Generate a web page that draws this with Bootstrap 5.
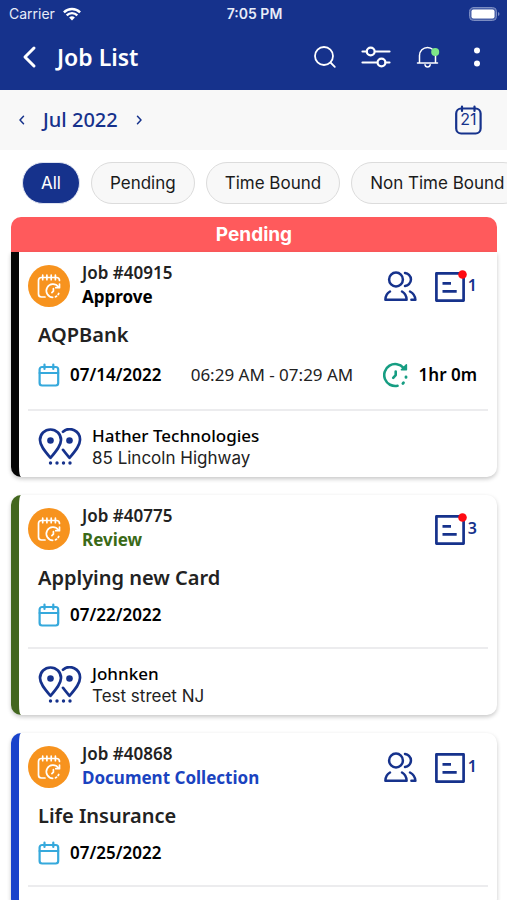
<!DOCTYPE html>
<html lang="en">
<head>
<meta charset="utf-8">
<meta name="viewport" content="width=device-width, initial-scale=1">
<title>Job List</title>
<link href="https://cdn.jsdelivr.net/npm/bootstrap@5.3.0/dist/css/bootstrap.min.css" rel="stylesheet">
<style>
  :root { --navy: #16328c; --noto: "Noto Sans", "Open Sans", sans-serif; --ui: Inter, "Liberation Sans", sans-serif; }
  body { font-family: var(--noto); font-size: 17px; color: #000; background: #fff; overflow-x: hidden; }
  svg { display: block; flex: none; fill: none; stroke: currentColor; stroke-linecap: round; stroke-linejoin: round; }
  .app-top { background: var(--navy); }
  .status-bar { height: 28px; font: 14px/28px var(--ui); padding: 0 7px 0 9px; color: #e8ecf8; }
  .status-bar > * { flex: 1 1 0; }
  .status-time { font-weight: 600; }
  .title-bar { height: 62px; padding: 0 18px 4px 19px; }
  .title-bar h1 { font-size: 23px; line-height: 30px; font-weight: 600; margin-left: 17px; }
  .icon-btn { background: none; border: 0; padding: 0; color: inherit; display: block; }
  .month-bar { height: 60px; background: #f8f8f8; color: var(--navy); padding: 0 24px 0 16px; }
  .month-bar h2 { font-size: 20px; line-height: 28px; font-weight: 500; margin: 0 15px; }
  .day-text { font: 16px var(--ui); fill: currentColor; stroke: none; }
  .chips { padding: 12px 0 13px 22px; gap: 11px; overflow: hidden; }
  .chip { font: 17px/24px var(--ui); color: #1b1b1b; background: #f8f8f8; border: 1px solid #dcdcdc; border-radius: 21px; padding: 8px 18px; white-space: nowrap; }
  .chip.active { background: var(--navy); color: #fff; border-color: #dfe3f0; }
  .jobs { padding: 0 10px 0 11px; gap: 18px; }
  .group-title { font: 700 19px/35px var(--ui); color: #fff; background: #ff5a5c; border-radius: 10px 10px 0 0; text-align: center; margin: 0; }
  .job { background: #fff; border-left: 8px solid var(--edge); border-radius: 10px; box-shadow: 0 2px 4px rgba(0,0,0,.22); padding: 9px 9px 8px; }
  .job.grouped { border-top-left-radius: 0; border-top-right-radius: 0; }
  .edge-black { --edge: #050505; --kind: #000; }
  .edge-green { --edge: #43671f; --kind: #3a6a17; }
  .edge-blue { --edge: #1a43cb; --kind: #1a43c0; }
  .job-id { line-height: 24px; font-weight: 600; color: #222; margin: 0; }
  .job-kind { line-height: 24px; font-weight: 700; color: var(--kind); margin: 0; }
  .job-head { gap: 12px; }
  .job-tools { color: var(--navy); padding: 8px 11px 0 0; gap: 17px; }
  .count { font-size: 16px; line-height: 20px; font-weight: 600; padding-bottom: 2px; }
  .job-title { font-size: 20px; line-height: 26px; font-weight: 600; color: #222; margin: 13px 0 12px; padding-left: 10px; }
  .job-when { min-height: 24px; line-height: 24px; padding: 0 11px 0 10px; font-weight: 600; }
  .job-when.timed { min-height: 29px; }
  .time-range { font-weight: 400; color: #222; }
  .job-date { gap: 10px; }
  .job-left { gap: 10px; }
  .rule { border: 0; border-top: 2px solid #ececee; opacity: 1; margin: 20px 0 14px; }
  .place { gap: 10px; padding-left: 10px; line-height: 22px; color: var(--navy); }
  .place-name { font-weight: 500; color: #000; }
  .place-addr { font-family: var(--ui); color: #222; }
</style>
<script src="https://cdn.jsdelivr.net/npm/bootstrap@5.3.0/dist/js/bootstrap.bundle.min.js" defer></script>
</head>
<body>
<svg width="0" height="0" class="position-absolute" aria-hidden="true">
  <symbol id="i-job" viewBox="0 0 42 42">
    <circle cx="21" cy="21" r="21" fill="#f7931e" stroke="none"/>
    <g stroke="#fff" stroke-width="1.700">
      <path d="M17 32h-3.500a3 3 0 0 1-3-3V15.500a3 3 0 0 1 3-3h15a3 3 0 0 1 3 3"/>
      <path d="M14.700 10.200v4.500M18.900 10.200v4.500M23.200 10.200v4.500M27.400 10.200v4.500"/>
      <path d="M30.300 21.800a6.600 6.600 0 1 0-5.600 10.500"/>
      <path d="M31.500 19v3.700h-3.700"/>
      <path d="M27.500 31.800a6.600 6.600 0 0 0 3.800-5.500" stroke-dasharray="1.200 2.300"/>
      <path d="M25.400 23.500v2.700l-1.500 1.500"/>
    </g>
  </symbol>
  <symbol id="i-people" viewBox="0 0 33 31">
    <g stroke-width="2.500">
      <circle cx="12" cy="8.500" r="6.900"/>
      <path d="M21 2c2 .3 3 .9 4 1.900c2.600 2.600 2.600 6.600 0 9.200c-1 1-2 1.600-4 1.900"/>
      <path d="M6 20.500c-3.600 2-4.600 4.700-4.600 8.300h21.200c0-3.600-1-6.300-4.600-8.300"/>
      <path d="M26 20.500c3.800 2 5.200 4.700 5.400 8.300h-4"/>
    </g>
  </symbol>
  <symbol id="i-note" viewBox="0 0 34 34">
    <g stroke-width="2.700" stroke-linecap="butt">
      <path d="M2.400 4.400h27.200v27.200H2.400z"/>
      <path d="M8.500 14.300h8.500M8.500 22.400h14.200"/>
    </g>
  </symbol>
  <symbol id="i-cal" viewBox="0 0 22 24">
    <g stroke="#36a9dc" stroke-width="2.200">
      <rect x="1.600" y="4" width="18.600" height="18.500" rx="2.500"/>
      <path d="M1.600 10h18.600M6.500 1.600v4.400M15.300 1.600v4.400"/>
    </g>
  </symbol>
  <symbol id="i-clock" viewBox="0 0 26 26">
    <g stroke="#169d82" stroke-width="2.600">
      <path d="M20.500 5.800A11 11 0 1 0 14.500 23.800"/>
      <path d="M23.400 2.800v5h-5z" fill="#169d82" stroke-width="1.500"/>
      <path d="M12.700 9.500v3.600l-2.500 2.700"/>
      <path d="M20.500 20.800l-.6.600M23 14.800v.6" stroke-width="2.800"/>
    </g>
  </symbol>
  <symbol id="i-pins" viewBox="0 0 44 38">
    <g stroke-width="2.700">
      <path d="M12.500 29.800C7.500 24 2 18 2 12a10.500 10.500 0 0 1 21 0c0 6-5.500 12-10.500 17.800z"/>
      <path d="M25 3.700A10.300 10.300 0 0 1 42 12c0 6-5.500 12-10.500 17.800-2.300-2.700-4.600-5.300-6.500-8"/>
    </g>
    <g fill="currentColor" stroke="none">
      <circle cx="12.500" cy="12.500" r="3.300"/><circle cx="31.500" cy="12.500" r="3.300"/>
      <circle cx="12.500" cy="35" r="1.700"/><circle cx="19" cy="35" r="1.700"/><circle cx="25.500" cy="35" r="1.700"/><circle cx="32" cy="35" r="1.700"/>
    </g>
  </symbol>
</svg>

<header class="app-top text-white">
  <div class="status-bar d-flex align-items-center">
    <div class="d-flex align-items-center gap-2"><span>Carrier</span>
      <svg width="18" height="14" viewBox="0 0 18 14" stroke-width="2.400" aria-hidden="true"><path d="M.9 5.300a11.500 11.500 0 0 1 16.200 0M3.700 8.300a7.500 7.500 0 0 1 10.600 0" stroke="#fff" stroke-linecap="butt"/><path d="M9 13.600l-2.900-3a4.100 4.100 0 0 1 5.800 0z" fill="#fff" stroke="none"/></svg>
    </div>
    <div class="status-time text-center">7:05 PM</div>
    <div class="d-flex justify-content-end">
      <svg width="31" height="14" viewBox="0 0 31 14" aria-hidden="true"><rect x=".5" y=".5" width="27" height="13" rx="4" stroke="#7c8dc2" fill="#4a61a9"/><rect x="2.500" y="2.500" width="23" height="9" rx="2" fill="#fff" stroke="none"/><path d="M29 5v4q1.500-.6 1.500-2t-1.500-2z" fill="#7c8dc2" stroke="none"/></svg>
    </div>
  </div>
  <nav class="title-bar d-flex align-items-center" aria-label="Main">
    <button class="icon-btn" type="button" aria-label="Back"><svg width="21" height="24" viewBox="0 0 21 24" stroke-width="3"><path d="M15 3L6 12l9 9"/></svg></button>
    <h1 class="mb-0 me-auto">Job List</h1>
    <div class="d-flex align-items-center">
      <button class="icon-btn" type="button" aria-label="Search"><svg width="24" height="24" viewBox="0 0 24 24" stroke-width="1.800"><circle cx="11" cy="11" r="9"/><path d="M17.500 17.500l4.300 4.300"/></svg></button>
      <button class="icon-btn ms-4" type="button" aria-label="Filter"><svg width="30" height="24" viewBox="0 0 30 24" stroke-width="2.200"><path d="M1.500 6.500h4M14 6.500h14.500M1.500 17.500h14.500M24.500 17.500h4"/><circle cx="9.700" cy="6.500" r="3.900"/><circle cx="20.500" cy="17.500" r="3.900"/></svg></button>
      <button class="icon-btn ms-4" type="button" aria-label="Notifications"><svg width="26" height="24" viewBox="0 0 26 24" stroke-width="1.500"><path d="M2.500 18h20M4.500 18v-7.500a8 8 0 0 1 16 0V18M10 19.700c.4 3 4.800 3 5.200 0"/><circle cx="20.200" cy="7" r="4" fill="#7ee787" stroke="none"/></svg></button>
      <button class="icon-btn ms-4" type="button" aria-label="More"><svg width="24" height="24" viewBox="0 0 24 24"><g fill="#fff" stroke="none"><circle cx="12" cy="5.500" r="3"/><circle cx="12" cy="18.500" r="3"/></g></svg></button>
    </div>
  </nav>
</header>

<section class="month-bar d-flex align-items-center" aria-label="Month">
  <button class="icon-btn" type="button" aria-label="Previous month"><svg width="12" height="12" viewBox="0 0 12 12" stroke-width="1.500"><path d="M7.500 2.200L4 6l3.500 3.800"/></svg></button>
  <h2>Jul 2022</h2>
  <button class="icon-btn me-auto" type="button" aria-label="Next month"><svg width="12" height="12" viewBox="0 0 12 12" stroke-width="1.500"><path d="M4.500 2.200L8 6 4.500 9.800"/></svg></button>
  <button class="icon-btn" type="button" aria-label="Go to today"><svg width="29" height="31" viewBox="0 0 29 31" stroke-width="2.200"><rect x="2.200" y="3.500" width="24.400" height="25" rx="5"/><path d="M8 1.500v4.500M20.500 1.500v4.500"/><text class="day-text" x="14.500" y="20" text-anchor="middle">21</text></svg></button>
</section>

<div class="chips d-flex" role="group" aria-label="Filter jobs">
  <button type="button" class="chip active" aria-pressed="true">All</button>
  <button type="button" class="chip">Pending</button>
  <button type="button" class="chip">Time Bound</button>
  <button type="button" class="chip">Non Time Bound</button>
</div>

<main class="jobs d-flex flex-column">
  <section>
    <h2 class="group-title">Pending</h2>
    <article class="job grouped edge-black">
      <div class="job-head d-flex align-items-start">
        <svg class="mt-1" width="42" height="42"><use href="#i-job"/></svg>
        <div class="flex-grow-1"><p class="job-id">Job #40915</p><p class="job-kind">Approve</p></div>
        <div class="job-tools d-flex align-items-center">
          <svg width="33" height="31"><use href="#i-people"/></svg>
          <div class="d-flex align-items-center"><svg width="34" height="34"><use href="#i-note"/><circle cx="28.500" cy="5.500" r="4.300" fill="#ff0a12" stroke="none"/></svg><span class="count">1</span></div>
        </div>
      </div>
      <h3 class="job-title">AQPBank</h3>
      <div class="job-when timed d-flex align-items-center justify-content-between">
        <div class="job-date d-flex align-items-center"><svg width="22" height="24"><use href="#i-cal"/></svg><span>07/14/2022</span></div>
        <span class="time-range">06:29 AM - 07:29 AM</span>
        <div class="job-left d-flex align-items-center"><svg width="26" height="26"><use href="#i-clock"/></svg><span>1hr 0m</span></div>
      </div>
      <hr class="rule">
      <div class="place d-flex align-items-center">
        <svg width="44" height="38"><use href="#i-pins"/></svg>
        <div><div class="place-name">Hather Technologies</div><div class="place-addr">85 Lincoln Highway</div></div>
      </div>
    </article>
  </section>

  <article class="job edge-green">
    <div class="job-head d-flex align-items-start">
      <svg class="mt-1" width="42" height="42"><use href="#i-job"/></svg>
      <div class="flex-grow-1"><p class="job-id">Job #40775</p><p class="job-kind">Review</p></div>
      <div class="job-tools d-flex align-items-center">
        <div class="d-flex align-items-center"><svg width="34" height="34"><use href="#i-note"/><circle cx="28.500" cy="5.500" r="4.300" fill="#ff0a12" stroke="none"/></svg><span class="count">3</span></div>
      </div>
    </div>
    <h3 class="job-title">Applying new Card</h3>
    <div class="job-when d-flex align-items-center">
      <div class="job-date d-flex align-items-center"><svg width="22" height="24"><use href="#i-cal"/></svg><span>07/22/2022</span></div>
    </div>
    <hr class="rule">
    <div class="place d-flex align-items-center">
      <svg width="44" height="38"><use href="#i-pins"/></svg>
      <div><div class="place-name">Johnken</div><div class="place-addr">Test street NJ</div></div>
    </div>
  </article>

  <article class="job edge-blue">
    <div class="job-head d-flex align-items-start">
      <svg class="mt-1" width="42" height="42"><use href="#i-job"/></svg>
      <div class="flex-grow-1"><p class="job-id">Job #40868</p><p class="job-kind">Document Collection</p></div>
      <div class="job-tools d-flex align-items-center">
        <svg width="33" height="31"><use href="#i-people"/></svg>
        <div class="d-flex align-items-center"><svg width="34" height="34"><use href="#i-note"/></svg><span class="count">1</span></div>
      </div>
    </div>
    <h3 class="job-title">Life Insurance</h3>
    <div class="job-when d-flex align-items-center">
      <div class="job-date d-flex align-items-center"><svg width="22" height="24"><use href="#i-cal"/></svg><span>07/25/2022</span></div>
    </div>
    <hr class="rule">
  </article>
</main>
</body>
</html>
